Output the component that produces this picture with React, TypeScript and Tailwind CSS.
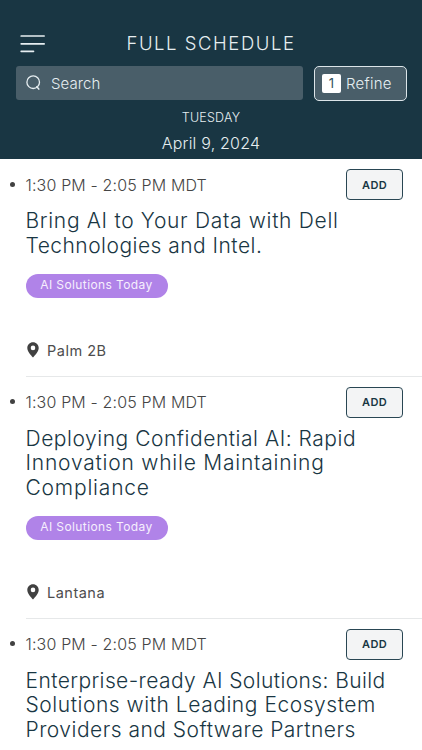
import clsx from "clsx";

type TitleLine = { text: string; tracking: string };

type Session = {
  id: number;
  time: string;
  title: TitleLine[];
  tag?: string;
  room?: string;
};

const sessions: Session[] = [
  {
    id: 1,
    time: "1:30 PM - 2:05 PM MDT",
    title: [
      { text: "Bring AI to Your Data with Dell", tracking: "tracking-[0.68px]" },
      { text: "Technologies and Intel.", tracking: "tracking-[0.47px]" },
    ],
    tag: "AI Solutions Today",
    room: "Palm 2B",
  },
  {
    id: 2,
    time: "1:30 PM - 2:05 PM MDT",
    title: [
      { text: "Deploying Confidential AI: Rapid", tracking: "tracking-[0.53px]" },
      { text: "Innovation while Maintaining", tracking: "tracking-[0.78px]" },
      { text: "Compliance", tracking: "tracking-[0.8px]" },
    ],
    tag: "AI Solutions Today",
    room: "Lantana",
  },
  {
    id: 3,
    time: "1:30 PM - 2:05 PM MDT",
    title: [
      { text: "Enterprise-ready AI Solutions: Build", tracking: "tracking-[0.4px]" },
      { text: "Solutions with Leading Ecosystem", tracking: "tracking-[0.54px]" },
      { text: "Providers and Software Partners", tracking: "tracking-[0.48px]" },
    ],
  },
];

function MenuIcon() {
  return (
    <svg width="25" height="18" viewBox="0 0 25 18" fill="none" stroke="#e6eef1" strokeWidth="1.7" strokeLinecap="round">
      <path d="M1.2 1h23M1.2 8.8h23M1.2 16.3h12.3" />
    </svg>
  );
}

function SearchIcon() {
  return (
    <svg width="15" height="16" viewBox="0 0 15 16" fill="none" stroke="#e6eef1" strokeWidth="1.3" strokeLinecap="round">
      <circle cx="7.2" cy="7.2" r="6.3" />
      <path d="M10.8 11.8l2 2.3" strokeWidth="1.5" />
    </svg>
  );
}

function PinIcon() {
  return (
    <svg width="12" height="16" viewBox="0 0 12 16" fill="#414141">
      <path
        fillRule="evenodd"
        d="M6 0.3C2.8 0.3 0.3 2.8 0.3 6c0 3.6 3.2 6.6 5.7 9.6 2.5-3 5.7-6 5.7-9.6C11.7 2.8 9.2 0.3 6 0.3zM6 3.6a2.3 2.3 0 1 1 0 4.6 2.3 2.3 0 0 1 0-4.6z"
      />
    </svg>
  );
}

function Header() {
  return (
    <header className="h-[159px] bg-[#193643] pt-[29px] text-[#e6eef1]">
      <div className="grid h-[29px] grid-cols-[1fr_auto_1fr] items-center px-5">
        <button aria-label="Menu">
          <MenuIcon />
        </button>
        <h1 className="whitespace-nowrap text-[18.5px] font-[350] tracking-[1.55px]">FULL SCHEDULE</h1>
      </div>

      <div className="mt-2 flex h-[35px] items-start pl-4 pr-[15px]">
        <div className="flex h-[34px] w-[287px] items-center rounded-[3px] bg-[#495e69] pl-[10px]">
          <SearchIcon />
          <span className="ml-[10px] mt-[3px] text-[15px] font-[350] tracking-[0.1px]">Search</span>
        </div>
        <button className="ml-[11px] flex h-[35px] w-[93px] items-center rounded-[5px] border-[1.5px] border-[#dce5e9] bg-[#495e69] pl-[7px]">
          <span className="flex size-[19px] items-center justify-center rounded-[2px] bg-white text-[13px] text-[#33505c]">1</span>
          <span className="ml-[5px] mt-px text-[15px] font-[350] tracking-[0.25px]">Refine</span>
        </button>
      </div>

      <div className="flex flex-col items-center">
        <span className="mt-[9px] text-[12.5px] font-[350] leading-4 tracking-[0.2px]">TUESDAY</span>
        <span className="mt-[7px] text-base font-[350] leading-5 tracking-[0.2px]">April 9, 2024</span>
      </div>
    </header>
  );
}

function SessionItem({ session, last }: { session: Session; last: boolean }) {
  return (
    <li className="pl-[10px]">
      <div className="flex">
        <span className="mr-[10.5px] mt-[22.5px] size-[5px] shrink-0 rounded-full bg-[#414141]" />
        <div className={clsx("flex-1 pt-[10px]", !last && "border-b border-[#e6e8e9]")}>
          <div className="flex h-[31px] items-center justify-between pr-[19px]">
            <span className="whitespace-nowrap text-base font-[350] tracking-[0.15px] text-[#454545]">{session.time}</span>
            <button className="h-[31px] w-[57px] rounded-[4px] border border-[#294653] bg-[#f3f4f5] pt-px text-[11px] font-semibold tracking-[0.3px] text-[#193643]">
              ADD
            </button>
          </div>

          <h2 className="mt-[9px] text-[21px] font-[350] leading-[24.5px] text-[#193643]">
            {session.title.map((line) => (
              <span key={line.text} className={clsx("block whitespace-nowrap", line.tracking)}>
                {line.text}
              </span>
            ))}
          </h2>

          {session.tag && (
            <div className="mt-[15.5px] flex h-[24.5px] w-[142px] justify-center rounded-full bg-[#b083e8]">
              <span className="text-xs leading-[22px] tracking-[0.4px] text-[#f6effd]">{session.tag}</span>
            </div>
          )}

          {session.room && (
            <div className="mb-[18px] mt-[43.5px] flex h-4 items-center pl-[1.5px] text-[#4d4d4d]">
              <PinIcon />
              <span className="ml-2 mt-[3px] text-[14.5px] tracking-[0.5px]">{session.room}</span>
            </div>
          )}
        </div>
      </div>
    </li>
  );
}

export default function App() {
  return (
    <div className="h-[750px] w-full overflow-hidden bg-white font-['Inter',sans-serif]">
      <Header />
      <ul>
        {sessions.map((session, i) => (
          <SessionItem key={session.id} session={session} last={i === sessions.length - 1} />
        ))}
      </ul>
    </div>
  );
}
